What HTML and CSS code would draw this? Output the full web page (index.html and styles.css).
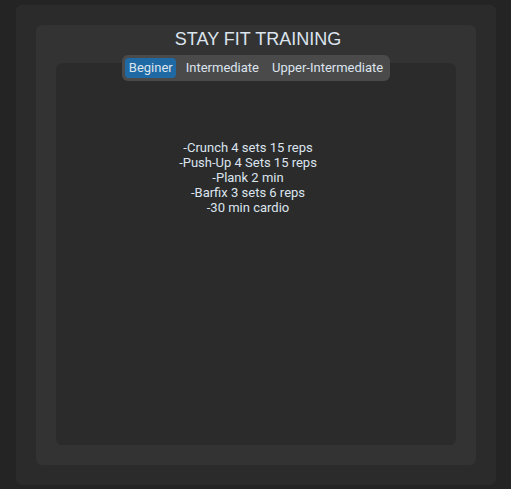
FILE: index.html
```html
<!DOCTYPE html>
<html>
<head>
<meta charset="utf-8">
<link rel="stylesheet" href="styles.css">
</head>
<body>
<div class="outer">
  <div class="panel">
    <div class="title">STAY FIT TRAINING</div>
    <div class="tabview">
      <div class="segmented">
        <span class="seg seg-active">Beginer</span>
        <span class="seg">Intermediate</span>
        <span class="seg">Upper-Intermediate</span>
      </div>
      <div class="tabframe">
        <div class="workout">
          <div>-Crunch 4 sets 15 reps</div>
          <div>-Push-Up 4 Sets 15 reps</div>
          <div>-Plank 2 min</div>
          <div>-Barfix 3 sets 6 reps</div>
          <div>-30 min cardio</div>
        </div>
      </div>
    </div>
  </div>
</div>
</body>
</html>
```

FILE: styles.css
```css
html, body {
  margin: 0;
  padding: 0;
}
body {
  background: #242424;
  width: 511px;
  height: 489px;
  padding: 5px 0 0 16px;
  box-sizing: border-box;
  font-family: Roboto, "Liberation Sans", sans-serif;
  color: #dce4ee;
}
.outer {
  width: 480px;
  height: 480px;
  background: #2b2b2b;
  border-radius: 6px;
  padding: 20px;
  box-sizing: border-box;
}
.panel {
  width: 440px;
  height: 440px;
  background: #333333;
  border-radius: 6px;
  padding: 4px 20px 20px;
  box-sizing: border-box;
  display: flex;
  flex-direction: column;
}
.title {
  font-family: "Liberation Sans", Arial, sans-serif;
  font-size: 18px;
  line-height: 20px;
  text-align: center;
  padding-left: 4px;
}
.tabview {
  margin-top: 6px;
  flex: 1;
  display: flex;
  flex-direction: column;
}
.segmented {
  align-self: center;
  display: flex;
  gap: 6px;
  padding: 3px;
  background: #4a4a4a;
  border-radius: 6px;
  position: relative;
  z-index: 1;
}
.seg {
  font-size: 13px;
  line-height: 20px;
  height: 20px;
  padding: 0 3.5px;
  border-radius: 4px;
}
.seg-active {
  background: #1f6aa5;
}
.tabframe {
  flex: 1;
  margin-top: -18px;
  background: #2b2b2b;
  border-radius: 6px;
  padding: 77px 16px 0 0;
}
.workout {
  font-size: 13px;
  line-height: 15px;
  text-align: center;
}
```
